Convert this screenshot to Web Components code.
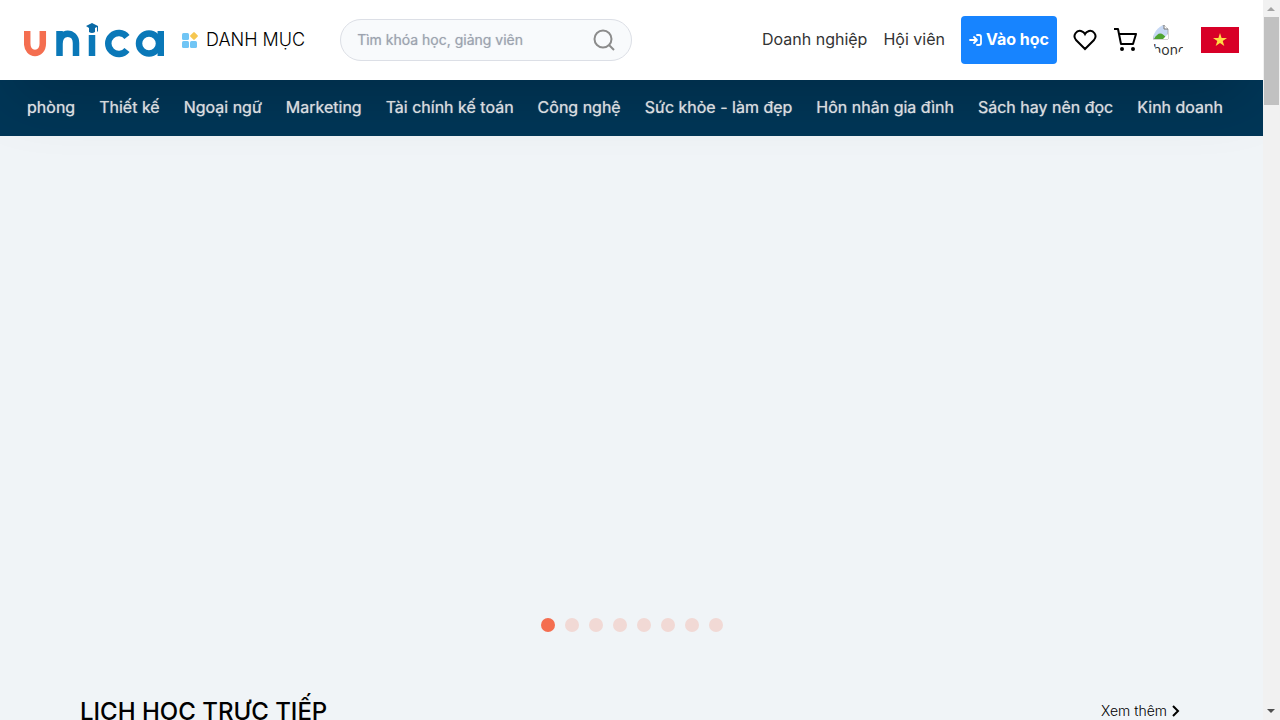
<!DOCTYPE html>
<html lang="vi">
<head>
<meta charset="utf-8">
<meta name="viewport" content="width=device-width, initial-scale=1">
<title>Unica</title>
<style>
html, body { height: 100%; margin: 0; }
body { font-family: Inter, "Noto Sans", sans-serif; color: #000; background: #f0f4f7; overflow: hidden; }
</style>
</head>
<body>
<unica-app></unica-app>
<script>
const define = (name, html, setup) => {
  const template = document.createElement('template');
  template.innerHTML = html;
  customElements.define(name, class extends HTMLElement {
    constructor() {
      super();
      this.attachShadow({ mode: 'open' }).append(template.content.cloneNode(true));
    }
    connectedCallback() { if (setup) setup(this, this.shadowRoot); }
  });
};

define('unica-logo', `
<style>
:host { display: block; }
a, svg { display: block; }
</style>
<a href="#" aria-label="Unica"><svg width="140" height="36" viewBox="1 0 140 36" fill="none" stroke="#0a78b8" stroke-width="6.500">
<path stroke="#f46e50" d="M4.200 9v12.500c0 12.500 15.600 12.500 15.600 0V9"/>
<path d="M36.500 34V9M36.500 22c0-14 16.500-13 16.500-1v13M69 13v21"/>
<path d="M104 15a10.500 10.500 0 1 0 0 13"/>
<circle cx="126" cy="21.500" r="10"/><path d="M137.800 9v25"/>
<path stroke="none" fill="#0a6aa6" d="M63 4l6-3 6 3v5l-1 1V5l-2 1v4q-3 2-6 0V6z"/>
</svg></a>`);

define('category-button', `
<style>
:host { display: block; }
button { display: flex; align-items: center; gap: 8px; padding: 0; border: 0; background: none; font: 300 18px/28px Inter, sans-serif; color: #000; white-space: nowrap; }
</style>
<button type="button"><svg width="16" height="16" viewBox="0 0 16 16"><g fill="#70c5f5"><rect width="7" height="7" y="1" rx="1.500"/><rect y="9" width="7" height="7" rx="1.500"/><rect x="8" y="9" width="7" height="7" rx="1.500"/></g><rect x="9" y="1" width="6" height="6" rx="1" fill="#f6c750" transform="rotate(45 12 4)"/></svg><span>DANH MỤC</span></button>`);

define('search-box', `
<style>
:host { display: block; }
form { display: flex; align-items: center; box-sizing: border-box; height: 42px; padding: 0 16px; border: 1px solid #dcdfe6; border-radius: 21px; background: #f8fafc; }
input { flex: 1; min-width: 0; padding: 0; border: 0; outline: 0; background: none; font: 400 14px/20px Inter, sans-serif; color: #333; }
input::placeholder { color: #9ca3af; opacity: 1; text-shadow: 0 0 1px rgba(156,163,175,.6); }
button { display: block; padding: 0; border: 0; background: none; }
svg { display: block; }
</style>
<form><input type="text" aria-label="Tìm kiếm" placeholder="Tìm khóa học, giảng viên"><button type="button" aria-label="Tìm"><svg width="22" height="22" viewBox="0 0 22 22" fill="none" stroke="#8c8c8c" stroke-width="2"><circle cx="10" cy="10" r="8.500"/><path d="M16 16l5 5"/></svg></button></form>`);

define('user-tools', `
<style>
:host { display: flex; align-items: center; gap: 16px; font-weight: 400; font-size: 16px; line-height: 24px; white-space: nowrap; }
a { padding-bottom: 2px; color: #333; text-decoration: none; }
.enter { display: flex; align-items: center; gap: 4px; box-sizing: border-box; height: 48px; padding: 0 8px; border: 0; border-radius: 4px; background: #1784ff; color: #fff; font: 700 16px/24px Inter, sans-serif; }
.enter span { padding-bottom: 2px; }
.icon { padding: 0; border: 0; background: none; color: #000; }
svg { display: block; }
.flag { margin: 0 8px 0 0; padding: 0; border: 0; background: none; }
.avatar { width: 32px; height: 32px; border-radius: 50%; overflow: hidden; }
.avatar span { display: block; color: #333; font-size: 14px; line-height: 20px; }
</style>
<a href="#">Doanh nghiệp</a>
<a href="#">Hội viên</a>
<button class="enter" type="button"><svg width="13" height="12" viewBox="0 0 13 12" fill="none" stroke="#fff" stroke-width="1.800" stroke-linecap="round" stroke-linejoin="round"><path d="M1 6h7M5 3l3 3-3 3M8 1h2q2 0 2 2v6q0 2-2 2H8"/></svg><span>Vào học</span></button>
<button class="icon" type="button" aria-label="Yêu thích"><svg width="24" height="24" viewBox="0 0 24 24" fill="none" stroke="currentColor" stroke-width="2"><path d="M12 21L3 12C-1 7 4 2 8 3q3 1 4 3 1-2 4-3c4-1 9 4 5 9z"/></svg></button>
<button class="icon" type="button" aria-label="Giỏ hàng"><svg width="24" height="24" viewBox="0 0 24 24" fill="none" stroke="currentColor" stroke-width="2" stroke-linejoin="round"><path d="M1 1h4l3 15h12l3-10H6"/><circle cx="9" cy="21" r="1"/><circle cx="20" cy="21" r="1"/></svg></button>
<div class="avatar"><svg width="16" height="16" viewBox="0 0 16 16"><path d="M0 1h11l4 4v10H0z" fill="#c6d8f4" stroke="#aaa"/><path d="M1 15q6-11 13 0" fill="#4ea431"/><path d="M10 15l5-5v5z" fill="#fff"/><path d="M11 1v4h4" fill="#fff" stroke="#777"/></svg><span>hong</span></div>
<button class="flag" type="button" aria-label="Tiếng Việt"><svg width="38" height="26" viewBox="0 0 38 26"><path fill="#d80027" d="M0 0h38v26H0z"/><path fill="#ffda44" d="M19 6l1.600 5H26l-4.300 3.100 1.600 5L19 16l-4.300 3.100 1.600-5L12 11h5.400z"/></svg></button>`);

define('site-header', `
<style>
:host { display: flex; align-items: center; box-sizing: border-box; height: 80px; padding: 0 16px 0 24px; background: #fff; position: relative; z-index: 2; box-shadow: 0 24px 64px -16px rgba(0,0,0,.25); }
category-button { margin-left: 18px; }
search-box { width: 292px; margin-left: 35px; }
user-tools { margin-left: auto; }
</style>
<unica-logo></unica-logo><category-button></category-button><search-box></search-box><user-tools></user-tools>`);

define('topic-nav', `
<style>
:host { display: block; background: #003657; }
nav { display: flex; justify-content: flex-end; gap: 24px; height: 56px; box-sizing: border-box; align-items: center; padding: 0 40px 2px 24px; }
a { color: #e8ebee; text-decoration: none; font-weight: 400; font-size: 16px; line-height: 24px; white-space: nowrap; text-shadow: 0 0 1px rgba(232,235,238,.7); }
</style>
<nav></nav>`, (host, root) => {
  const nav = root.querySelector('nav');
  if (nav.childElementCount) return;
  for (const name of ['phòng','Thiết kế','Ngoại ngữ','Marketing','Tài chính kế toán','Công nghệ','Sức khỏe - làm đẹp','Hôn nhân gia đình','Sách hay nên đọc','Kinh doanh']) {
    const a = document.createElement('a');
    a.href = '#';
    a.textContent = name;
    nav.append(a);
  }
});

define('hero-carousel', `
<style>
:host { display: flex; align-items: flex-end; justify-content: center; gap: 10px; box-sizing: border-box; height: 496px; }
button { width: 14px; height: 14px; padding: 0; border: 0; border-radius: 50%; background: #f1d9d5; }
button:first-of-type { background: #f46e50; }
</style>`, (host, root) => {
  if (root.querySelector('button')) return;
  for (let i = 1; i <= 8; i++) {
    const b = document.createElement('button');
    b.type = 'button';
    b.setAttribute('aria-label', 'Slide ' + i);
    root.append(b);
  }
});

define('live-schedule', `
<style>
:host { display: flex; align-items: center; justify-content: space-between; padding: 0 80px; margin-top: 62px; }
h2 { margin: 0; font-weight: 500; font-size: 24px; line-height: 36px; }
a { display: flex; align-items: center; gap: 4px; padding-bottom: 2px; color: #000; text-decoration: none; font-weight: 300; font-size: 14px; line-height: 20px; }
</style>
<h2>LỊCH HỌC TRỰC TIẾP</h2>
<a href="#"><span>Xem thêm</span><svg width="12" height="12" viewBox="0 0 12 12" fill="none" stroke="#000" stroke-width="2"><path d="M2 1l5 5-5 5"/></svg></a>`);

define('scroll-track', `
<style>
:host { display: flex; flex-direction: column; align-items: center; width: 17px; background: #f1f1f1; }
svg { display: block; flex: none; }
div { width: 15px; height: 88px; background: #c1c1c1; }
svg:last-child { margin-top: auto; }
</style>
<svg width="17" height="17"><path d="M4 11l4-4 4 4z" fill="#a3a3a3"/></svg><div></div><svg width="17" height="17"><path d="M4 6l4 4 4-4z" fill="#505050"/></svg>`);

define('unica-app', `
<style>
:host { display: flex; height: 100vh; overflow: hidden; }
main { flex: 1; min-width: 0; overflow: hidden; }
</style>
<main><site-header></site-header><topic-nav></topic-nav><hero-carousel></hero-carousel><live-schedule></live-schedule></main><scroll-track></scroll-track>`);
</script>
</body>
</html>
